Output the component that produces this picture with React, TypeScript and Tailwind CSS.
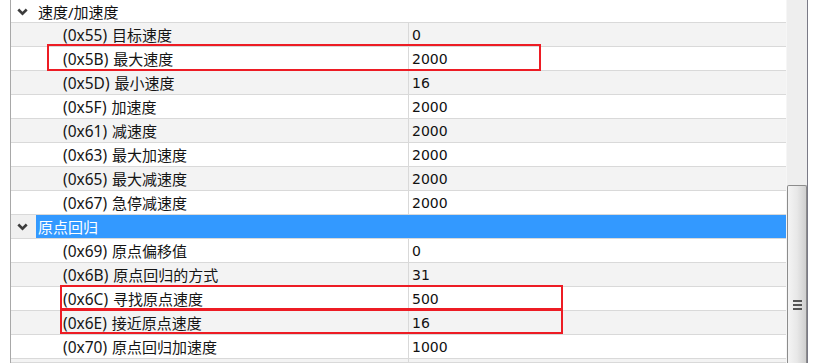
import React from "react";

type Row = { code: string; label: string; value: string };

const group1: Row[] = [
  { code: "(0x55)", label: "目标速度", value: "0" },
  { code: "(0x5B)", label: "最大速度", value: "2000" },
  { code: "(0x5D)", label: "最小速度", value: "16" },
  { code: "(0x5F)", label: "加速度", value: "2000" },
  { code: "(0x61)", label: "减速度", value: "2000" },
  { code: "(0x63)", label: "最大加速度", value: "2000" },
  { code: "(0x65)", label: "最大减速度", value: "2000" },
  { code: "(0x67)", label: "急停减速度", value: "2000" },
];

const group2: Row[] = [
  { code: "(0x69)", label: "原点偏移值", value: "0" },
  { code: "(0x6B)", label: "原点回归的方式", value: "31" },
  { code: "(0x6C)", label: "寻找原点速度", value: "500" },
  { code: "(0x6E)", label: "接近原点速度", value: "16" },
  { code: "(0x70)", label: "原点回归加速度", value: "1000" },
  { code: "", label: "", value: "" },
];

const nameFont = { fontFamily: '"Noto Sans", "Noto Sans CJK SC", sans-serif' };
const valueFont = { fontFamily: '"DejaVu Sans", "Noto Sans CJK SC", sans-serif' };

function Chevron({ color }: { color: string }) {
  return (
    <svg width="11" height="8" viewBox="0 0 11 8" className="block">
      <path d="M1.3 1.5 L5.5 5.7 L9.7 1.5" fill="none" stroke={color} strokeWidth="2.6" strokeLinecap="butt" strokeLinejoin="miter" />
    </svg>
  );
}

function GroupHeader({ title, selected, h }: { title: string; selected?: boolean; h: string }) {
  return (
    <div className={`flex ${h} border-b border-[#d9d9d9]`}>
      <div className={`w-[25px] shrink-0 flex items-center pl-[6px] pt-[1px] ${selected ? "bg-[#f0f0f0]" : "bg-white"}`}>
        <Chevron color="#3c3c3c" />
      </div>
      <div
        className={`flex-1 flex items-center pl-[2px] pt-[2px] text-[15px] ${selected ? "bg-[#3399ff] text-white" : "bg-white text-[#111]"}`}
        style={nameFont}
      >
        {title}
      </div>
    </div>
  );
}

function DataRow({ row, gray }: { row: Row; gray: boolean }) {
  return (
    <div className={`flex h-[24px] border-b border-[#d9d9d9] ${gray ? "bg-[#f3f3f3]" : "bg-white"}`}>
      <div
        className="w-[398px] shrink-0 border-r border-[#d9d9d9] flex items-center pl-[52px] pt-[2px] text-[15px] text-[#151515] whitespace-nowrap"
        style={nameFont}
      >
        {row.code && (
          <>
            <span className="text-[15.5px]">{row.code}</span>
            <span className="ml-[5px]">{row.label}</span>
          </>
        )}
      </div>
      <div className="flex-1 flex items-center pl-[3px] pt-[2px] text-[14px] text-[#111]" style={valueFont}>
        {row.value}
      </div>
    </div>
  );
}

export default function App() {
  return (
    <div className="relative w-[814px] h-[363px] overflow-hidden bg-white flex">
      <div className="w-[11px] shrink-0 bg-white border-r border-[#a8a8a8]" />
      <div className="w-[775px] shrink-0 flex flex-col">
        <GroupHeader title="速度/加速度" h="h-[23px]" />
        {group1.map((r, i) => (
          <DataRow key={i} row={r} gray={i % 2 === 0} />
        ))}
        <GroupHeader title="原点回归" selected h="h-[24px]" />
        {group2.map((r, i) => (
          <DataRow key={i} row={r} gray={i % 2 === 1} />
        ))}
      </div>
      <div className="w-[21px] shrink-0 bg-[#eeeeee] border-l border-[#f6f6f6] flex flex-col">
        <div className="h-[185px] shrink-0" />
        <div className="flex-1 rounded-t-[2px] border border-b-0 border-[#8c8c8c] bg-gradient-to-r from-[#f4f4f4] via-[#e8e8e8] to-[#cfcfcf] flex flex-col items-center pt-[114px]">
          <div className="flex flex-col gap-[2px]">
            <div className="w-[9px] h-[2px] bg-[#555]" />
            <div className="w-[9px] h-[2px] bg-[#555]" />
            <div className="w-[9px] h-[2px] bg-[#555]" />
          </div>
        </div>
      </div>
      <div className="w-[1px] shrink-0 bg-[#7a7a86]" />
      <div className="flex-1 bg-white" />

      <div className="absolute left-[47px] top-[44px] w-[494px] h-[27px] border-2 border-[#ed1c24]" />
      <div className="absolute left-[60px] top-[285px] w-[503px] h-[25px] border-2 border-[#ed1c24]" />
      <div className="absolute left-[60px] top-[309px] w-[503px] h-[25px] border-2 border-[#ed1c24]" />
    </div>
  );
}
